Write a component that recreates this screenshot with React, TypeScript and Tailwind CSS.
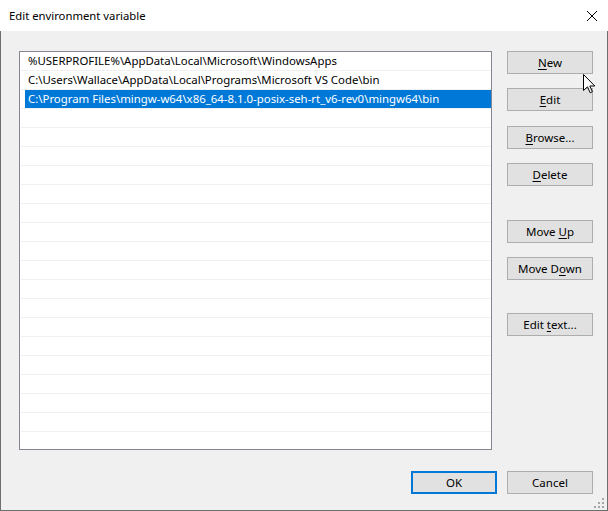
import React from "react";

interface DialogButtonProps {
  label: string;
  accessKey?: number;
  isDefault?: boolean;
  className?: string;
}

// Windows-style push button, underlines the access key character
const DialogButton: React.FC<DialogButtonProps> = ({
  label,
  accessKey,
  isDefault = false,
  className = "",
}) => {
  const before = accessKey === undefined ? label : label.slice(0, accessKey);
  const key = accessKey === undefined ? "" : label.charAt(accessKey);
  const after = accessKey === undefined ? "" : label.slice(accessKey + 1);

  return (
    <button
      className={`w-[86px] h-[23px] flex items-center justify-center bg-[#e1e1e1] text-[11.5px] text-black leading-none ${
        isDefault ? "border-2 border-[#0078d7]" : "border border-[#adadad]"
      } ${className}`}
    >
      <span>
        {before}
        {key && <span className="underline underline-offset-2">{key}</span>}
        {after}
      </span>
    </button>
  );
};

const App: React.FC = () => {
  const paths = [
    "%USERPROFILE%\\AppData\\Local\\Microsoft\\WindowsApps",
    "C:\\Users\\Wallace\\AppData\\Local\\Programs\\Microsoft VS Code\\bin",
    "C:\\Program Files\\mingw-w64\\x86_64-8.1.0-posix-seh-rt_v6-rev0\\mingw64\\bin",
  ];
  const selectedIndex = 2;
  const emptyRows = Array.from({ length: 18 });

  return (
    <div
      className="relative w-[608px] h-[511px] flex flex-col bg-[#f0f0f0] text-black select-none"
      style={{ fontFamily: '"Noto Sans", "Open Sans", sans-serif' }}
    >
      {/* Title bar */}
      <div className="h-[31px] shrink-0 bg-white flex items-center justify-between pl-[9px] pr-[10px]">
        <span className="text-[11.3px] leading-none mt-[1px]">Edit environment variable</span>
        <svg width="10" height="10" viewBox="0 0 10 10" className="mr-[1px]">
          <path d="M0 0 L10 10 M10 0 L0 10" stroke="#000" strokeWidth="1" fill="none" />
        </svg>
      </div>

      {/* Dialog body */}
      <div className="flex-1 flex flex-col border-l border-r border-b border-[#6f6f6f] pt-[20px] pl-[18px] pr-[13px]">
        <div className="flex gap-[15px]">
          {/* Path list */}
          <div className="w-[473px] h-[399px] border border-[#828790] bg-white pl-[1px] overflow-hidden">
            {paths.map((path, index) => (
              <div key={path} className="h-[19px] border-b border-[#f0f0f0]">
                {index === selectedIndex ? (
                  <div className="ml-[4px] h-[18px] bg-[#0078d7] text-white flex items-center pl-[3px] text-[11.4px] whitespace-nowrap">
                    {path}
                  </div>
                ) : (
                  <div className="h-[18px] flex items-center pl-[7px] text-[11.4px] whitespace-nowrap">
                    {path}
                  </div>
                )}
              </div>
            ))}
            {emptyRows.map((_, index) => (
              <div key={index} className="h-[19px] border-b border-[#f0f0f0]" />
            ))}
          </div>

          {/* Action buttons */}
          <div className="flex flex-col">
            <DialogButton label="New" accessKey={0} />
            <DialogButton label="Edit" accessKey={0} className="mt-[14px]" />
            <DialogButton label="Browse..." accessKey={0} className="mt-[15px]" />
            <DialogButton label="Delete" accessKey={0} className="mt-[14px]" />
            <DialogButton label="Move Up" accessKey={5} className="mt-[34px]" />
            <DialogButton label="Move Down" accessKey={6} className="mt-[14px]" />
            <DialogButton label="Edit text..." accessKey={5} className="mt-[33px]" />
          </div>
        </div>

        {/* OK / Cancel */}
        <div className="flex justify-end gap-[10px] mt-[21px] pr-[1px]">
          <DialogButton label="OK" isDefault />
          <DialogButton label="Cancel" />
        </div>
      </div>

      {/* Mouse pointer hovering the New button */}
      <svg
        width="13"
        height="20"
        viewBox="0 0 13 20"
        className="absolute left-[583px] top-[74px]"
      >
        <path
          d="M0.5 0.5 L0.5 16.5 L4.5 12.8 L7.2 18.8 L9.4 17.8 L6.8 12 L11.8 12 Z"
          fill="#fff"
          stroke="#000"
          strokeWidth="1"
          strokeLinejoin="miter"
        />
      </svg>

      {/* Resize grip */}
      <svg width="11" height="11" viewBox="0 0 11 11" className="absolute right-[3px] bottom-[2px]">
        <rect x="8" y="0" width="2" height="2" fill="#a6a6a6" />
        <rect x="4" y="4" width="2" height="2" fill="#a6a6a6" />
        <rect x="8" y="4" width="2" height="2" fill="#a6a6a6" />
        <rect x="0" y="8" width="2" height="2" fill="#a6a6a6" />
        <rect x="4" y="8" width="2" height="2" fill="#a6a6a6" />
        <rect x="8" y="8" width="2" height="2" fill="#a6a6a6" />
      </svg>
    </div>
  );
};

export default App;
